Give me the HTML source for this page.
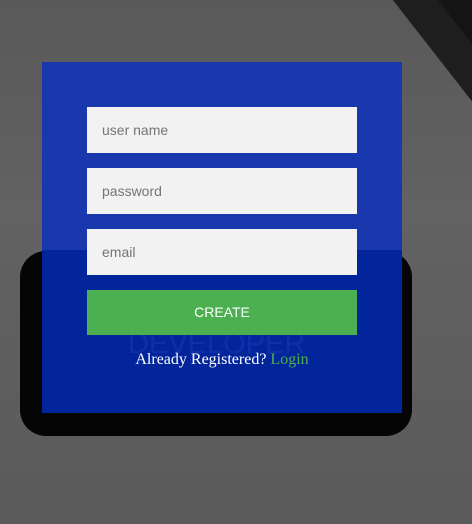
<!DOCTYPE html>
<html><head><style>
body{margin:0;width:472px;height:524px;overflow:hidden;background:#5e5e5e;position:relative;font-family:"Liberation Sans",sans-serif}
.bg1{position:absolute;left:0;top:0;width:472px;height:524px;background:linear-gradient(180deg,#595959 0%,#626262 40%,#5a5a5a 100%)}
.corner{position:absolute;left:385px;top:-10px;width:40px;height:200px;background:#1e1e1e;transform:rotate(-38deg);transform-origin:0 0}
.corner2{position:absolute;left:430px;top:-10px;width:60px;height:100px;background:#141414;transform:rotate(-38deg);transform-origin:0 0}
.phone{position:absolute;left:20px;top:251px;width:392px;height:185px;background:#050505;border-radius:26px}
.panel{position:absolute;left:42px;top:62px;width:360px;height:351px;background:#1a38ad}
.lower{position:absolute;left:42px;top:250px;width:360px;height:163px;background:#03259b}
.in{position:absolute;left:87px;width:270px;height:46px;background:#f2f2f2;color:#757575;font-size:14px;line-height:46px;box-sizing:border-box;padding-left:15px}
.btn{position:absolute;left:87px;top:290px;width:270px;height:45px;background:#4caf50;color:#fff;font-size:14px;line-height:45px;text-align:center}
.dev{position:absolute;left:128px;top:328px;font-size:29px;color:#0d2fa8}
.txt{position:absolute;left:0;width:444px;top:351px;text-align:center;font-family:"Liberation Serif",serif;font-size:16px;color:#fff}
.txt span{color:#4caf50}
</style></head><body>
<div class="bg1"></div>
<div class="corner"></div>
<div class="corner2"></div>
<div class="phone"></div>
<div class="panel"></div>
<div class="lower"></div>
<div class="in" style="top:107px">user name</div>
<div class="in" style="top:168px">password</div>
<div class="in" style="top:229px">email</div>
<div class="dev">DEVELOPER</div>
<div class="btn">CREATE</div>
<div class="txt">Already Registered? <span>Login</span></div>
</body></html>
